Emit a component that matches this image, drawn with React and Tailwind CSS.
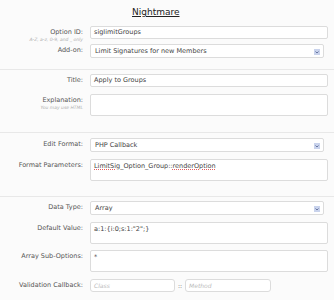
import React from "react";

const font = { fontFamily: '"DejaVu Sans", Verdana, sans-serif' };

function Arrow() {
  return (
    <span className="absolute right-[3px] top-[4px] w-[6px] h-[6px] bg-[#c9d3ec] flex items-center justify-center">
      <svg width="4" height="3" viewBox="0 0 4 3">
        <path d="M0.5 0.5 L2 2 L3.5 0.5" stroke="#5a6a9a" strokeWidth="0.9" fill="none" />
      </svg>
    </span>
  );
}

function Row({ label, hint, children, mt = "mt-[7px]" }) {
  return (
    <div className={`flex ${mt}`}>
      <div className="w-[84px] pr-[1px] text-right">
        <div className="text-[6.5px] leading-[13px] text-[#555]">{label}</div>
        {hint && <div className="text-[4.5px] leading-[5px] italic text-[#b0b0b0] -mt-[2px]">{hint}</div>}
      </div>
      <div className="ml-[6px] flex-1">{children}</div>
    </div>
  );
}

function Input({ value, w = "w-[238px]" }) {
  return (
    <div className={`${w} h-[13px] bg-white border border-[#dcdcdc] rounded-[2px] px-[3px] text-[6.5px] leading-[11px] text-[#444]`}>
      {value}
    </div>
  );
}

function Select({ value }) {
  return (
    <div className="relative w-[234px] h-[14px] bg-white border border-[#dcdcdc] rounded-[2px] px-[4px] text-[6.5px] leading-[12px] text-[#444]">
      {value}
      <Arrow />
    </div>
  );
}

function Area({ value, children }) {
  return (
    <div className="w-[238px] h-[22px] bg-white border border-[#dcdcdc] rounded-[2px] px-[3px] pt-[2px] text-[6.5px] leading-[9px] text-[#444]">
      {children || value}
    </div>
  );
}

function Sep() {
  return <div className="h-px bg-[#e8e8e8] w-full" />;
}

export default function App() {
  return (
    <div className="w-[334px] h-[300px] bg-[#fbfbfb] overflow-hidden" style={font}>
      <div className="pt-[6px] pl-[132px] text-[9px] leading-[12px] text-[#222] underline">Nightmare</div>

      <Row label="Option ID:" hint="A-Z, a-z, 0-9, and _ only" mt="mt-[8px]">
        <Input value="sigIimitGroups" />
      </Row>
      <Row label="Add-on:" mt="mt-[2px]">
        <Select value="Limit Signatures for new Members" />
      </Row>
      <div className="mt-[11px]"><Sep /></div>

      <Row label="Title:" mt="mt-[4px]">
        <Input value="Apply to Groups" />
      </Row>
      <Row label="Explanation:" hint="You may use HTML" mt="mt-[7px]">
        <Area value="" />
      </Row>
      <div className="mt-[16px]"><Sep /></div>

      <Row label="Edit Format:" mt="mt-[5px]">
        <Select value="PHP Callback" />
      </Row>
      <Row label="Format Parameters:" mt="mt-[7px]">
        <Area>
          <span className="underline decoration-dotted decoration-[#e06060]">LimitSig</span>
          _Option_Group::
          <span className="underline decoration-dotted decoration-[#e06060]">renderOption</span>
        </Area>
      </Row>
      <div className="mt-[15px]"><Sep /></div>

      <Row label="Data Type:" mt="mt-[4px]">
        <Select value="Array" />
      </Row>
      <Row label="Default Value:" mt="mt-[7px]">
        <Area value={'a:1:{i:0;s:1:"2";}'} />
      </Row>
      <Row label="Array Sub-Options:" mt="mt-[6px]">
        <Area value="*" />
      </Row>
      <Row label="Validation Callback:" mt="mt-[7px]">
        <div className="flex items-center">
          <div className="w-[85px] h-[13px] bg-white border border-[#dcdcdc] rounded-[3px] px-[3px] text-[6px] leading-[11px] italic text-[#bbb]">Class</div>
          <span className="mx-[3px] text-[6px] text-[#666]">::</span>
          <div className="w-[86px] h-[13px] bg-white border border-[#dcdcdc] rounded-[3px] px-[3px] text-[6px] leading-[11px] italic text-[#bbb]">Method</div>
        </div>
      </Row>
    </div>
  );
}
